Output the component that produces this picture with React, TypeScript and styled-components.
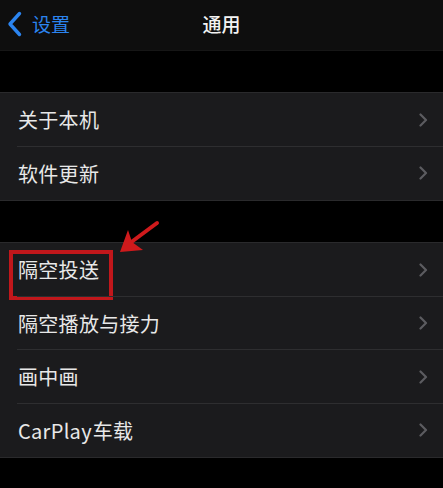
import styled, { createGlobalStyle } from "styled-components";

const GlobalStyle = createGlobalStyle`
  html, body {
    margin: 0;
    padding: 0;
    background: #000;
  }
  body {
    font-family: "Noto Sans CJK SC", "Noto Sans", sans-serif;
    -webkit-font-smoothing: antialiased;
  }
`;

const Screen = styled.div`
  position: relative;
  width: 443px;
  height: 488px;
  background: #000;
  overflow: hidden;
`;

const NavBar = styled.div`
  position: relative;
  display: flex;
  align-items: center;
  justify-content: center;
  height: 51px;
  background: #0e0e0e;
  border-bottom: 1px solid #161616;
  box-sizing: border-box;
`;

const BackButton = styled.div`
  position: absolute;
  left: 7px;
  top: 0;
  bottom: 0;
  display: flex;
  align-items: center;
  gap: 9px;
  margin-top: -3px;
  color: #2b84ef;
  font-size: 19px;
`;

const Title = styled.div`
  color: #f2f2f2;
  font-size: 19px;
  font-weight: 500;
  margin-top: -4px;
`;

const Group = styled.div<{ $gap: number }>`
  margin-top: ${(p) => p.$gap}px;
  background: #1b1b1d;
  border-top: 1px solid #2a2a2c;
  border-bottom: 1px solid #2a2a2c;
`;

const Row = styled.div`
  position: relative;
  display: flex;
  align-items: center;
  justify-content: space-between;
  height: 53.5px;
  padding: 0 15px 0 18px;
  &:not(:last-child)::after {
    content: "";
    position: absolute;
    left: 17px;
    right: 0;
    bottom: 0;
    height: 1px;
    background: #2e2e30;
  }
`;

const Label = styled.span`
  color: #e8e8e8;
  font-size: 20px;
  letter-spacing: 0.3px;
  word-spacing: -4px;
`;

const Highlight = styled.div`
  position: absolute;
  left: 9px;
  top: 7px;
  width: 104px;
  height: 50px;
  border: 4px solid #c1171b;
  box-sizing: border-box;
  pointer-events: none;
`;

const Arrow = styled.svg`
  position: absolute;
  left: 110px;
  top: 216px;
`;

function Chevron() {
  return (
    <svg width="9" height="14" viewBox="0 0 9 14">
      <path
        d="M1.5 1.5 L7 7 L1.5 12.5"
        fill="none"
        stroke="#5c5c60"
        strokeWidth="2.2"
        strokeLinecap="round"
        strokeLinejoin="round"
      />
    </svg>
  );
}

const general = [["关于本机", "软件更新"], ["隔空投送", "隔空播放与接力", "画中画", "CarPlay 车载"]];

export default function App() {
  return (
    <>
      <GlobalStyle />
      <Screen>
        <NavBar>
          <BackButton>
            <svg width="16" height="26" viewBox="0 0 16 26">
              <path
                d="M12.5 2.5 L3 13 L12.5 23.5"
                fill="none"
                stroke="#2b84ef"
                strokeWidth="3.4"
                strokeLinecap="round"
                strokeLinejoin="round"
              />
            </svg>
            <span>设置</span>
          </BackButton>
          <Title>通用</Title>
        </NavBar>

        {general.map((items, gi) => (
          <Group key={gi} $gap={41}>
            {items.map((item) => (
              <Row key={item}>
                <Label>{item}</Label>
                <Chevron />
                {item === "隔空投送" && <Highlight />}
              </Row>
            ))}
          </Group>
        ))}

        <Arrow width="56" height="44" viewBox="0 0 56 44">
          <line x1="47" y1="7" x2="16" y2="30" stroke="#cf1a1c" strokeWidth="4" strokeLinecap="round" />
          <path d="M10 36 L18 14 L22 26 L33 34 Z" fill="#cf1a1c" />
        </Arrow>
      </Screen>
    </>
  );
}
